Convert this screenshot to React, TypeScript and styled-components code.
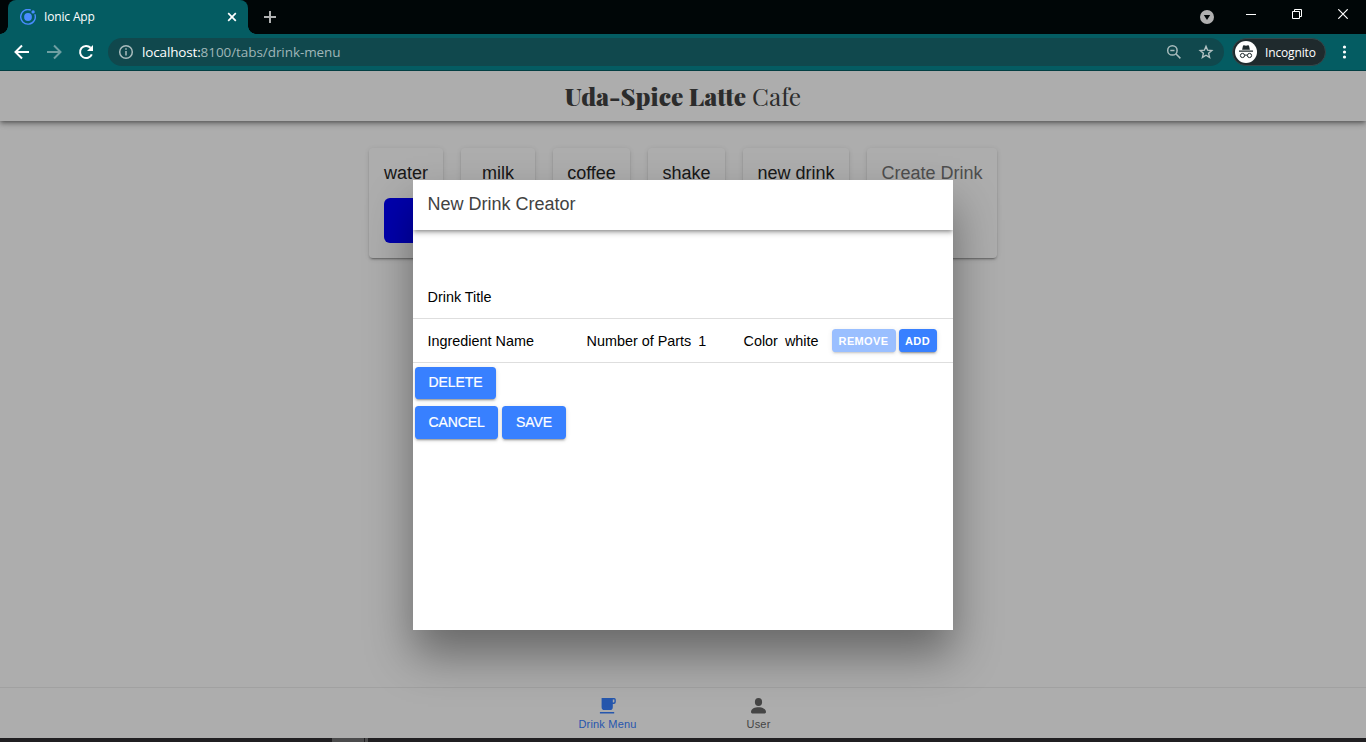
import React from "react";
import styled, { createGlobalStyle } from "styled-components";

const Global = createGlobalStyle`
  * { box-sizing: border-box; }
  html, body { margin: 0; padding: 0; overflow: hidden; }
  body { font-family: "Liberation Sans", Arial, sans-serif; }
  svg { display: block; flex: none; }
`;

const Screen = styled.div`
  width: 1366px;
  height: 742px;
  display: flex;
  flex-direction: column;
  overflow: hidden;
`;

/* Browser frame */
const TabStrip = styled.div`
  height: 34px;
  flex: none;
  background: #000607;
  display: flex;
  padding-left: 8px;
  font-family: "Open Sans", "Noto Sans", sans-serif;
`;
const BrowserTab = styled.div`
  position: relative;
  width: 240px;
  height: 34px;
  background: #045c62;
  border-radius: 8px 8px 0 0;
  display: flex;
  align-items: center;
  padding: 0 11px 0 12px;
  color: #fff;
  font-size: 12px;
  &::before, &::after {
    content: "";
    position: absolute;
    bottom: 0;
    width: 8px;
    height: 8px;
  }
  &::before { left: -8px; background: radial-gradient(circle at 0 0, transparent 7.5px, #045c62 8px); }
  &::after { right: -8px; background: radial-gradient(circle at 100% 0, transparent 7.5px, #045c62 8px); }
`;
const TabTitle = styled.span`
  flex: 1;
  margin-left: 8px;
  padding-bottom: 1px;
  letter-spacing: -0.15px;
`;
const NewTab = styled.div`
  margin: 11px 0 0 16px;
`;
const WindowControls = styled.div`
  margin-left: auto;
  display: flex;
  align-items: flex-start;
`;
const Control = styled.div<{ $w: number; $top: number }>`
  width: ${(p) => p.$w}px;
  padding-top: ${(p) => p.$top}px;
  display: flex;
  justify-content: center;
`;
const Toolbar = styled.div`
  height: 37px;
  flex: none;
  background: #045c62;
  border-bottom: 1px solid #033f43;
  display: flex;
  align-items: center;
  padding: 0 13px 0 13px;
  font-family: "Open Sans", "Noto Sans", sans-serif;
`;
const NavButtons = styled.div`
  display: flex;
  gap: 14px;
`;
const AddressBar = styled.div`
  width: 1116px;
  height: 28px;
  margin-left: 13px;
  border-radius: 14px;
  background: #10484d;
  display: flex;
  align-items: center;
  padding: 0 10px 0 9px;
`;
const Url = styled.span`
  flex: 1;
  margin-left: 7px;
  padding-bottom: 1px;
  font-size: 13.5px;
  letter-spacing: -0.07px;
  color: #9fb6b8;
  b { font-weight: 400; color: #fff; letter-spacing: -0.15px; }
`;
const BarIcons = styled.div`
  display: flex;
  gap: 16px;
`;
const Incognito = styled.div`
  width: 94px;
  height: 28px;
  margin-left: 8px;
  border-radius: 14px;
  border: 1px solid #33474a;
  background: #1f2a2d;
  display: flex;
  align-items: center;
  gap: 8px;
  padding-left: 2px;
  color: #fff;
  font-size: 12px;
  letter-spacing: -0.15px;
`;
const Kebab = styled.div`
  width: 16px;
  margin-left: 11px;
`;

/* Application page */
const Page = styled.div`
  position: relative;
  height: 667px;
  flex: none;
  display: flex;
  flex-direction: column;
  background: #fff;
  overflow: hidden;
`;
const AppHeader = styled.header`
  height: 50px;
  flex: none;
  display: flex;
  justify-content: center;
  align-items: center;
  box-shadow: 0 2px 4px -1px rgba(0, 0, 0, 0.4), 0 4px 5px rgba(0, 0, 0, 0.14), 0 1px 9px rgba(0, 0, 0, 0.12);
`;
const Brand = styled.h1`
  margin: 0;
  font-family: "Playfair Display", "Liberation Serif", serif;
  font-size: 24.5px;
  line-height: 30px;
  font-weight: 400;
  color: #424242;
  white-space: pre;
  b { font-weight: 900; }
`;
const Drinks = styled.main`
  flex: 1;
  display: flex;
  justify-content: center;
  align-items: flex-start;
  gap: 18px;
  padding-top: 27px;
`;
const DrinkCard = styled.div<{ $w: number; $muted?: boolean }>`
  width: ${(p) => p.$w}px;
  height: 110px;
  padding: 14px 15px;
  border-radius: 4px;
  display: flex;
  flex-direction: column;
  align-items: center;
  color: ${(p) => (p.$muted ? "#737373" : "#262626")};
  font-size: 18px;
  line-height: 22px;
  white-space: nowrap;
  box-shadow: 0 3px 1px -2px rgba(0, 0, 0, 0.2), 0 2px 2px rgba(0, 0, 0, 0.14), 0 1px 5px rgba(0, 0, 0, 0.12);
`;
const Swatch = styled.div<{ $color: string }>`
  width: 45px;
  height: 45px;
  margin-top: 14px;
  border-radius: 6px;
  background: ${(p) => p.$color};
`;
const TabBar = styled.nav`
  height: 51px;
  flex: none;
  border-top: 1px solid #ededed;
  display: flex;
  justify-content: center;
`;
const NavTab = styled.div<{ $active?: boolean }>`
  width: 151px;
  display: flex;
  flex-direction: column;
  align-items: center;
  padding-top: 9px;
  gap: 3px;
  color: ${(p) => (p.$active ? "#3880ff" : "#666")};
  font-size: 11px;
  line-height: 13px;
  letter-spacing: 0.2px;
`;
const Backdrop = styled.div`
  position: absolute;
  inset: 0;
  background: rgba(0, 0, 0, 0.32);
  display: flex;
  justify-content: center;
  padding-top: 109px;
`;
const Modal = styled.section`
  width: 540px;
  height: 450px;
  background: #fff;
  box-shadow: 0 25px 43px rgba(0, 0, 0, 0.4);
  color: #000;
`;
const ModalHeader = styled.div`
  height: 50px;
  padding: 13px 15px 0 14.5px;
  color: #424242;
  font-size: 18px;
  line-height: 22px;
  clip-path: inset(0 0 -12px 0);
  box-shadow: 0 2px 4px -1px rgba(0, 0, 0, 0.4), 0 4px 5px rgba(0, 0, 0, 0.14);
`;
const FieldRow = styled.div<{ $tall?: boolean }>`
  height: ${(p) => (p.$tall ? 89 : 44)}px;
  padding: ${(p) => (p.$tall ? "45px" : "0")} 16px 0 14.5px;
  border-bottom: 1px solid #dedede;
  display: flex;
  align-items: center;
  font-size: 14.4px;
  white-space: pre;
`;
const Field = styled.span<{ $w?: number }>`
  width: ${(p) => (p.$w ? p.$w + "px" : "auto")};
  flex: none;
  display: flex;
  gap: 7px;
`;
const SmallButton = styled.button<{ $w: number; $disabled?: boolean }>`
  width: ${(p) => p.$w}px;
  height: 23px;
  margin: 0 0 0 3px;
  padding: 0 1px 0 0;
  flex: none;
  border: 0;
  border-radius: 3.6px;
  background: #3880ff;
  color: #fff;
  font: 700 11px "Liberation Sans", sans-serif;
  letter-spacing: 0.35px;
  opacity: ${(p) => (p.$disabled ? 0.5 : 1)};
  box-shadow: 0 3px 1px -2px rgba(0, 0, 0, 0.2), 0 2px 2px rgba(0, 0, 0, 0.14), 0 1px 5px rgba(0, 0, 0, 0.12);
`;
const Actions = styled.div<{ $top: number }>`
  display: flex;
  gap: 4px;
  padding: ${(p) => p.$top}px 2px 0;
`;
const ActionButton = styled.button<{ $w: number; $h: number }>`
  width: ${(p) => p.$w}px;
  height: ${(p) => p.$h}px;
  padding: 0 0 ${(p) => (p.$h === 32 ? 2 : 1)}px;
  border: 0;
  border-radius: 3.6px;
  background: #3880ff;
  color: #fff;
  font: 400 14px "Liberation Sans", sans-serif;
  -webkit-text-stroke: 0.2px #fff;
  letter-spacing: -0.1px;
  box-shadow: 0 3px 1px -2px rgba(0, 0, 0, 0.2), 0 2px 2px rgba(0, 0, 0, 0.14), 0 1px 5px rgba(0, 0, 0, 0.12);
`;
const Taskbar = styled.div`
  height: 4px;
  flex: none;
  background: #201f21;
  display: flex;
  padding-left: 332px;
`;
const TaskItem = styled.div<{ $w: number; $c: string }>`
  width: ${(p) => p.$w}px;
  background: ${(p) => p.$c};
`;

const IonicLogo = () => (
  <svg width="16" height="16" viewBox="0 0 16 16" fill="none">
    <path d="M10.8 1.1A7.3 7.3 0 1 0 14.8 5.2" stroke="#4a8cff" strokeWidth="1.4" />
    <circle cx="8" cy="8" r="3.9" fill="#4a8cff" />
    <circle cx="13.1" cy="2.9" r="1.7" fill="#4a8cff" />
  </svg>
);
const Arrow = ({ forward }: { forward?: boolean }) => (
  <svg width="18" height="18" viewBox="0 0 18 18" fill="none" stroke={forward ? "#6f9fa2" : "#fff"} strokeWidth="2">
    {forward ? <path d="M2 9h13M9 2.5 15.5 9 9 15.5" /> : <path d="M16 9H3M9 2.5 2.5 9 9 15.5" />}
  </svg>
);
const Reload = () => (
  <svg width="18" height="18" viewBox="0 0 18 18">
    <path d="M14.8 11.3a6.1 6.1 0 1 1-1.2-6.5" fill="none" stroke="#fff" strokeWidth="2" />
    <path d="M16 2v6h-6z" fill="#fff" />
  </svg>
);

const drinks = [
  { name: "water", w: 74, color: "#0000ff" },
  { name: "milk", w: 74, color: "#ffffff" },
  { name: "coffee", w: 77, color: "#6f4e37" },
  { name: "shake", w: 77, color: "#ffffff" },
  { name: "new drink", w: 106, color: "#ffffff" },
];

export default function App() {
  return (
    <Screen>
      <Global />
      <TabStrip>
        <BrowserTab>
          <IonicLogo />
          <TabTitle>Ionic App</TabTitle>
          <svg width="10" height="10" viewBox="0 0 10 10" stroke="#fff" strokeWidth="1.7">
            <path d="M1.2 1.2l7.6 7.6M8.8 1.2 1.2 8.8" />
          </svg>
        </BrowserTab>
        <NewTab>
          <svg width="12" height="12" viewBox="0 0 12 12" stroke="#b0b2b2" strokeWidth="2">
            <path d="M6 0v12M0 6h12" />
          </svg>
        </NewTab>
        <WindowControls>
          <Control $w={42} $top={10}>
            <svg width="14" height="14" viewBox="0 0 14 14">
              <circle cx="7" cy="7" r="7" fill="#b0b0b0" />
              <path d="M3.8 5h6.4L7 10z" fill="#000607" />
            </svg>
          </Control>
          <Control $w={46} $top={14}>
            <svg width="10" height="1"><rect width="10" height="1" fill="#fff" /></svg>
          </Control>
          <Control $w={46} $top={9}>
            <svg width="10" height="10" viewBox="0 0 10 10" fill="none" stroke="#fff">
              <path d="M.5 2.5h7v7h-7zM2.5 2.5v-2h7v7h-2" />
            </svg>
          </Control>
          <Control $w={46} $top={9}>
            <svg width="10" height="10" viewBox="0 0 10 10" stroke="#fff" strokeWidth="1.2">
              <path d="M.3.3l9.4 9.4M9.7.3.3 9.7" />
            </svg>
          </Control>
        </WindowControls>
      </TabStrip>
      <Toolbar>
        <NavButtons>
          <Arrow />
          <Arrow forward />
          <Reload />
        </NavButtons>
        <AddressBar>
          <svg width="18" height="18" viewBox="0 0 18 18" fill="none" stroke="#a9bcbd" strokeWidth="1.5">
            <circle cx="9" cy="9" r="6.3" />
            <path d="M9 8v4.5M9 5.2v1.6" />
          </svg>
          <Url><b>localhost:</b>8100/tabs/drink-menu</Url>
          <BarIcons>
            <svg width="16" height="16" viewBox="0 0 16 16" fill="none" stroke="#a9bcbd" strokeWidth="1.5">
              <circle cx="6.4" cy="6.4" r="4.7" />
              <path d="m9.8 9.8 4.6 4.6M4.3 6.4h4.2" />
            </svg>
            <svg width="16" height="16" viewBox="0 0 16 16" fill="none" stroke="#b3c2c3" strokeWidth="1.4">
              <path d="m8 2.3 1.6 3.9 4.2.3-3.2 2.8 1 4.1L8 11.2l-3.6 2.2 1-4.1-3.2-2.8 4.2-.3z" />
            </svg>
          </BarIcons>
        </AddressBar>
        <Incognito>
          <svg width="22" height="22" viewBox="0 0 22 22">
            <circle cx="11" cy="11" r="11" fill="#fff" />
            <path d="M7.1 8.8 8 4.8q.3-.8 1-.6l2 .5 2-.5q.7-.2 1 .6l.9 4zM4 9.5h14v1.2H4z" fill="#1f2a2d" />
            <g fill="none" stroke="#1f2a2d" strokeWidth="1">
              <circle cx="7.5" cy="14.5" r="2.1" />
              <circle cx="14.5" cy="14.5" r="2.1" />
              <path d="M9.6 14.3q1.4-.6 2.8 0" />
            </g>
          </svg>
          Incognito
        </Incognito>
        <Kebab>
          <svg width="16" height="16" viewBox="0 0 16 16" fill="#fff">
            <circle cx="7.5" cy="3" r="1.6" /><circle cx="7.5" cy="8" r="1.6" /><circle cx="7.5" cy="13" r="1.6" />
          </svg>
        </Kebab>
      </Toolbar>

      <Page>
        <AppHeader>
          <Brand><b>Uda-Spice Latte</b> Cafe</Brand>
        </AppHeader>
        <Drinks>
          {drinks.map((d) => (
            <DrinkCard key={d.name} $w={d.w}>
              {d.name}
              <Swatch $color={d.color} />
            </DrinkCard>
          ))}
          <DrinkCard $w={130} $muted>Create Drink</DrinkCard>
        </Drinks>
        <TabBar>
          <NavTab $active>
            <svg width="18" height="18" viewBox="0 0 18 18" fill="currentColor">
              <path fillRule="evenodd" d="M2.6 1H15.2Q16.8 1 16.8 2.6V5Q16.8 7 14.8 7H13.8V10.2Q13.8 13 11 13H5.4Q2.6 13 2.6 10.2ZM13.8 2.4V5.6H14.6Q15.4 5.6 15.4 4.8V2.4ZM.9 14.9H15.2V16.4H.9Z" />
            </svg>
            Drink Menu
          </NavTab>
          <NavTab>
            <svg width="18" height="18" viewBox="0 0 18 18" fill="currentColor">
              <ellipse cx="8.5" cy="5" rx="3.6" ry="3.9" />
              <path d="M1 15c0-3.4 4-4.8 7.5-4.8s7.5 1.4 7.5 4.8q0 1.4-1.2 1.4H2.2Q1 16.4 1 15z" />
            </svg>
            User
          </NavTab>
        </TabBar>
        <Backdrop>
          <Modal>
            <ModalHeader>New Drink Creator</ModalHeader>
            <FieldRow $tall>Drink Title</FieldRow>
            <FieldRow>
              <Field $w={159}>Ingredient Name</Field>
              <Field $w={157}><span>Number of Parts</span><span>1</span></Field>
              <Field $w={85.5}><span>Color</span><span>white</span></Field>
              <SmallButton $w={64} $disabled>REMOVE</SmallButton>
              <SmallButton $w={38}>ADD</SmallButton>
            </FieldRow>
            <Actions $top={4}>
              <ActionButton $w={81} $h={32}>DELETE</ActionButton>
            </Actions>
            <Actions $top={7}>
              <ActionButton $w={83} $h={33}>CANCEL</ActionButton>
              <ActionButton $w={64} $h={33}>SAVE</ActionButton>
            </Actions>
          </Modal>
        </Backdrop>
      </Page>
      <Taskbar>
        <TaskItem $w={32} $c="#4b4b4c" />
        <TaskItem $w={1} $c="#201f21" />
        <TaskItem $w={3} $c="#4b4b4c" />
      </Taskbar>
    </Screen>
  );
}
